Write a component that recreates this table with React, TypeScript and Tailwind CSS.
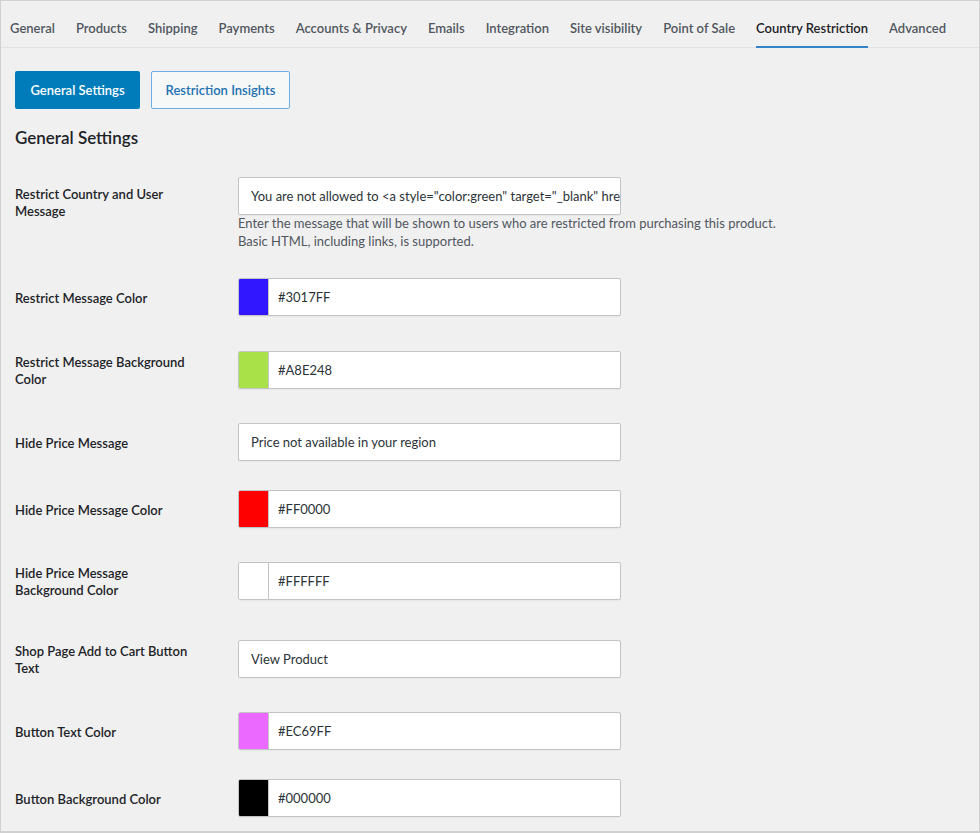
import { useState } from 'react'

const tabs = [
  'General',
  'Products',
  'Shipping',
  'Payments',
  'Accounts & Privacy',
  'Emails',
  'Integration',
  'Site visibility',
  'Point of Sale',
  'Country Restriction',
  'Advanced',
]

type Row = {
  label: string
  value: string
  swatch?: string
  rowClass: string
}

const rows: Row[] = [
  { label: 'Restrict Message Color', value: '#3017FF', swatch: 'bg-[#3017ff]', rowClass: 'mt-[28px]' },
  { label: 'Restrict Message Background Color', value: '#A8E248', swatch: 'bg-[#a8e248]', rowClass: 'mt-[35px]' },
  { label: 'Hide Price Message', value: 'Price not available in your region', rowClass: 'mt-[34px]' },
  { label: 'Hide Price Message Color', value: '#FF0000', swatch: 'bg-[#ff0000]', rowClass: 'mt-[29px]' },
  { label: 'Hide Price Message Background Color', value: '#FFFFFF', swatch: 'bg-white', rowClass: 'mt-[34px]' },
  { label: 'Shop Page Add to Cart Button Text', value: 'View Product', rowClass: 'mt-[40px]' },
  { label: 'Button Text Color', value: '#EC69FF', swatch: 'bg-[#ec69ff]', rowClass: 'mt-[34px]' },
  { label: 'Button Background Color', value: '#000000', swatch: 'bg-black', rowClass: 'mt-[29px]' },
]

const FieldInput = ({ value, swatch }: { value: string; swatch?: string }) => (
  <div className="flex h-[38px] w-[383px] overflow-hidden rounded-[2px] border border-[#c3c4c7] bg-white shadow-[0_1px_1px_rgba(0,0,0,0.04)]">
    {swatch && <div className={`h-full w-[30px] shrink-0 border-r border-[#c3c4c7] ${swatch}`} />}
    <input
      readOnly
      value={value}
      className={`h-full min-w-0 flex-1 bg-transparent text-[13px] text-[#2c3338] outline-none ${swatch ? 'pl-[9px]' : 'pl-[12px]'}`}
    />
  </div>
)

export default function App() {
  const [active, setActive] = useState('Country Restriction')

  return (
    <div
      className="h-[833px] w-[980px] overflow-hidden border border-b-2 border-[#d0d0d0] bg-[#f0f0f1] text-[#1d2327]"
      style={{ fontFamily: 'Lato, "Open Sans", sans-serif' }}
    >
      {/* Tabs */}
      <nav className="flex h-[47px] gap-[21px] border-b border-[#e2e2e4] pl-[9px]">
        {tabs.map((t) => (
          <button
            key={t}
            onClick={() => setActive(t)}
            className={`relative flex h-full items-center pt-[9px] text-[13px] font-semibold ${
              active === t ? 'text-[#1d2327]' : 'text-[#50575e]'
            }`}
          >
            {t}
            {active === t && <span className="absolute bottom-[-1px] left-0 right-0 h-[2px] bg-[#3582c4]" />}
          </button>
        ))}
      </nav>

      <div className="px-[14px]">
        {/* Section buttons */}
        <div className="mt-[23px] flex gap-[11px]">
          <button className="h-[38px] w-[125px] rounded-[2px] bg-[#007cba] pt-[2px] text-[13px] font-semibold text-white">
            General Settings
          </button>
          <button className="h-[38px] w-[139px] rounded-[2px] border border-[#72aee6] bg-[#f6f7f7] pt-[2px] text-[13px] font-semibold text-[#2271b1]">
            Restriction Insights
          </button>
        </div>

        <h2 className="mt-[18px] text-[17px] font-semibold leading-[22px] text-[#1d2327]">General Settings</h2>

        {/* First row with description */}
        <div className="mt-[28px] flex items-start">
          <div className="w-[223px] pt-[9px] pr-[45px] text-[13px] font-semibold leading-[17px] text-[#1d2327]">
            Restrict Country and User Message
          </div>
          <div>
            <FieldInput value={'You are not allowed to <a style="color:green" target="_blank" href="#">buy</a>'} />
            <p className="mt-[-1px] text-[13px] leading-[18px] text-[#50575e]">
              Enter the message that will be shown to users who are restricted from purchasing this product.
              <br />
              Basic HTML, including links, is supported.
            </p>
          </div>
        </div>

        {rows.map((r) => (
          <div key={r.label} className={`flex items-center ${r.rowClass}`}>
            <div className="w-[223px] pr-[45px] pt-[2px] text-[13px] font-semibold leading-[17px] text-[#1d2327]">
              {r.label}
            </div>
            <FieldInput value={r.value} swatch={r.swatch} />
          </div>
        ))}
      </div>
    </div>
  )
}
